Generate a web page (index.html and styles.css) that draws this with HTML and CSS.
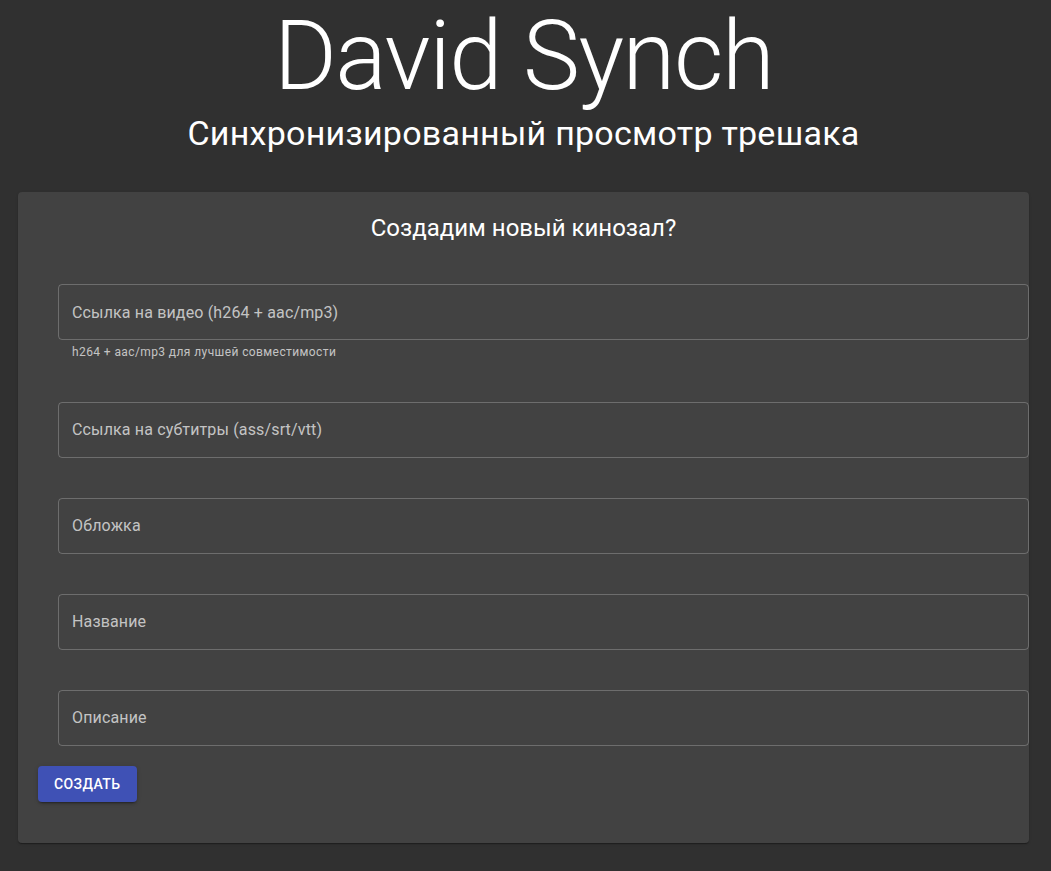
FILE: index.html
```html
<!DOCTYPE html>
<html lang="ru">
<head>
<meta charset="utf-8">
<title>David Synch</title>
<link rel="stylesheet" href="styles.css">
</head>
<body>
<div class="page">
  <header class="hero">
    <h1 class="hero-title">David Synch</h1>
    <h4 class="hero-subtitle">Синхронизированный просмотр трешака</h4>
  </header>
  <main class="card">
    <h5 class="card-title">Создадим новый кинозал?</h5>
    <form class="form">
      <div class="fields">
        <div class="field">
          <input class="input" type="text" placeholder="Ссылка на видео (h264 + aac/mp3)">
          <p class="helper">h264 + aac/mp3 для лучшей совместимости</p>
        </div>
        <div class="field">
          <input class="input" type="text" placeholder="Ссылка на субтитры (ass/srt/vtt)">
        </div>
        <div class="field">
          <input class="input" type="text" placeholder="Обложка">
        </div>
        <div class="field">
          <input class="input" type="text" placeholder="Название">
        </div>
        <div class="field">
          <input class="input" type="text" placeholder="Описание">
        </div>
      </div>
      <button class="btn" type="button">Создать</button>
    </form>
  </main>
</div>
</body>
</html>
```

FILE: styles.css
```css
html, body {
  margin: 0;
  padding: 0;
}

body {
  background: #303030;
  color: #fff;
  font-family: Roboto, "Noto Sans", "Liberation Sans", sans-serif;
  min-height: 871px;
}

.page {
  padding: 0 22px 29px 18px;
}

.hero {
  text-align: center;
}

.hero-title {
  margin: 0;
  font-size: 96px;
  font-weight: 300;
  line-height: 112px;
  letter-spacing: -1.5px;
}

.hero-subtitle {
  margin: 0;
  font-size: 34px;
  font-weight: 400;
  line-height: 42px;
  letter-spacing: 0.25px;
}

.card {
  margin-top: 38px;
  background: #424242;
  border-radius: 4px;
  box-shadow: 0 2px 1px -1px rgba(0,0,0,0.2), 0 1px 1px 0 rgba(0,0,0,0.14), 0 1px 3px 0 rgba(0,0,0,0.12);
  padding: 20px 0 41px 0;
}

.card-title {
  margin: 0;
  text-align: center;
  font-size: 24px;
  font-weight: 400;
  line-height: 32px;
}

.form {
  display: flex;
  flex-direction: column;
  align-items: flex-start;
  margin-top: 40px;
  gap: 20px;
}

.fields {
  align-self: stretch;
  display: flex;
  flex-direction: column;
  gap: 40px;
  padding-left: 40px;
}

.field {
  display: flex;
  flex-direction: column;
}

.input {
  box-sizing: border-box;
  width: 100%;
  height: 56px;
  margin: 0;
  padding: 0 13px;
  background: transparent;
  border: 1px solid rgba(255,255,255,0.23);
  border-radius: 4px;
  color: #fff;
  font-family: inherit;
  font-size: 16px;
  letter-spacing: 0.15px;
  outline: none;
}

.input::placeholder {
  color: rgba(255,255,255,0.7);
  opacity: 1;
}

.helper {
  margin: 3px 14px -1px;
  font-size: 12px;
  line-height: 19.92px;
  letter-spacing: 0.4px;
  color: rgba(255,255,255,0.7);
}

.btn {
  margin-left: 20px;
  height: 36px;
  padding: 0 16px;
  border: 0;
  border-radius: 4px;
  background: #3f51b5;
  color: #fff;
  font-family: inherit;
  font-size: 14px;
  font-weight: 500;
  letter-spacing: 0.4px;
  text-transform: uppercase;
  box-shadow: 0 3px 1px -2px rgba(0,0,0,0.2), 0 2px 2px 0 rgba(0,0,0,0.14), 0 1px 5px 0 rgba(0,0,0,0.12);
  cursor: pointer;
}
```
